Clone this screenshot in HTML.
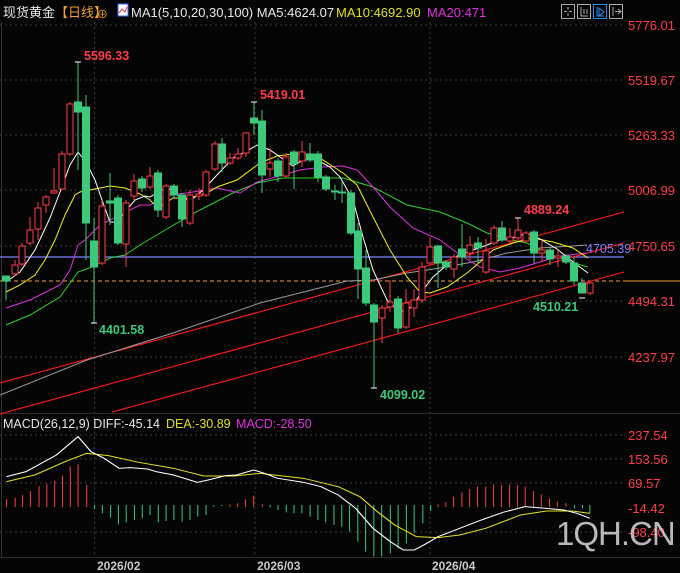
<!DOCTYPE html>
<html><head><meta charset="utf-8"><style>
html,body{margin:0;padding:0;background:#050505;}
body{width:680px;height:573px;overflow:hidden;position:relative;font-family:"Liberation Sans","Noto Sans CJK SC",sans-serif;}
svg{position:absolute;left:0;top:0;}
text{font-family:"Liberation Sans","Noto Sans CJK SC",sans-serif;}
</style></head><body>
<svg width="680" height="573" viewBox="0 0 680 573" xmlns="http://www.w3.org/2000/svg">
<rect width="680" height="573" fill="#050505"/>
<line x1="1.5" y1="22" x2="1.5" y2="557" stroke="#333" />
<!-- grid -->
<g stroke="#3a3a3a" stroke-dasharray="2,3" stroke-width="1">
<line x1="0" y1="25" x2="625" y2="25"/><line x1="0" y1="80" x2="625" y2="80"/><line x1="0" y1="135" x2="625" y2="135"/><line x1="0" y1="190" x2="625" y2="190"/><line x1="0" y1="246" x2="625" y2="246"/><line x1="0" y1="301" x2="625" y2="301"/><line x1="0" y1="357" x2="625" y2="357"/>
<line x1="0" y1="435" x2="625" y2="435"/><line x1="0" y1="459" x2="625" y2="459"/><line x1="0" y1="483" x2="625" y2="483"/><line x1="0" y1="532" x2="625" y2="532"/>
<line x1="94.5" y1="22" x2="94.5" y2="557"/><line x1="255" y1="22" x2="255" y2="557"/><line x1="430" y1="22" x2="430" y2="557"/>
</g>
<line x1="0" y1="413.5" x2="680" y2="413.5" stroke="#2a2a2a"/>
<line x1="0" y1="557.5" x2="680" y2="557.5" stroke="#2a2a2a"/>
<!-- horizontal lines -->
<line x1="0" y1="257" x2="624" y2="257" stroke="#7f7fff" stroke-width="1.2"/>
<line x1="0" y1="281" x2="624" y2="281" stroke="#f0a040" stroke-dasharray="4,3"/>
<line x1="624" y1="281" x2="680" y2="281" stroke="#f0a040"/>
<!-- trend lines -->
<g stroke="#ff1a1a" stroke-width="1.1">
<line x1="0" y1="383" x2="624" y2="212"/>
<line x1="0" y1="414" x2="624" y2="243"/>
<line x1="112" y1="412" x2="624" y2="272"/>
</g>
<!-- MA lines -->
<g fill="none" stroke-width="1">
<polyline stroke="#9a9a9a" points="0,395 87,360 173,333 260,303 347,281 373,280 407,273 440,268 473,262 507,253 540,248 573,246 587,245"/>
<polyline stroke="#30d030" points="6,325 30,315 60,297 78,272 92,267 110,258 125,255 140,245 150,239 177,223 200,210 233,193 257,183 283,178 317,178 343,178 373,187 407,205 440,212 467,223 487,233 507,239 527,243 547,253 573,263 588,267"/>
<polyline stroke="#e030e0" points="6,308 30,300 60,285 70,270 78,245 85,240 100,225 120,215 140,205 150,205 167,195 187,193 217,188 240,193 257,182 283,175 300,170 323,167 343,166 357,170 373,187 390,207 413,228 440,240 460,255 480,267 500,272 520,268 540,262 560,256 587,253"/>
<polyline stroke="#f0f020" points="6,292 20,285 35,275 45,260 55,240 65,215 75,195 80,192 90,190 100,188 110,186 125,188 140,194 150,200 158,208 173,198 190,198 207,193 217,187 237,180 260,163 277,156 293,154 310,154 323,160 343,173 357,185 373,217 390,250 407,277 420,292 430,293 447,287 467,273 480,262 493,250 513,243 533,238 553,242 573,248 588,258"/>
<polyline stroke="#ffffff" points="6,282 20,272 35,250 50,218 60,192 70,165 78,152 86,162 95,180 102,200 110,222 117,222 125,212 135,200 145,196 150,197 167,187 177,195 190,201 203,190 217,175 233,158 247,151 257,145 270,150 280,157 293,166 303,160 317,160 330,167 340,177 353,200 363,237 373,270 387,300 400,312 412,307 423,290 433,277 447,265 457,256 473,250 487,245 500,240 513,238 527,233 540,239 557,249 573,262 588,273"/>
</g>
<!-- candles -->
<g id="c" stroke-width="1">
<g stroke="#3cc97c" fill="#3cc97c">
<line x1="6" y1="276" x2="6" y2="300"/><rect x="2.5" y="276" width="7" height="5"/>
<line x1="78" y1="62" x2="78" y2="170"/><rect x="74.5" y="102" width="7" height="10"/>
<line x1="86" y1="95" x2="86" y2="260"/><rect x="82.5" y="107" width="7" height="116"/>
<line x1="94" y1="218" x2="94" y2="323"/><rect x="90.5" y="241" width="7" height="26"/>
<line x1="110" y1="173" x2="110" y2="225"/><rect x="106.5" y="201" width="7" height="2"/>
<line x1="118" y1="195" x2="118" y2="245"/><rect x="114.5" y="198" width="7" height="45"/>
<line x1="142" y1="176" x2="142" y2="192"/><rect x="138.5" y="179" width="7" height="9"/>
<line x1="158" y1="170" x2="158" y2="217"/><rect x="154.5" y="173" width="7" height="37"/>
<line x1="174" y1="184" x2="174" y2="198"/><rect x="170.5" y="186" width="7" height="9"/>
<line x1="182" y1="193" x2="182" y2="227"/><rect x="178.5" y="195" width="7" height="24"/>
<line x1="222" y1="138" x2="222" y2="172"/><rect x="218.5" y="144" width="7" height="19"/>
<line x1="254" y1="102" x2="254" y2="135"/><rect x="250.5" y="118" width="7" height="5"/>
<line x1="262" y1="110" x2="262" y2="193"/><rect x="258.5" y="121" width="7" height="54"/>
<line x1="278" y1="158" x2="278" y2="182"/><rect x="274.5" y="161" width="7" height="15"/>
<line x1="294" y1="150" x2="294" y2="189"/><rect x="290.5" y="152" width="7" height="12"/>
<line x1="310" y1="143" x2="310" y2="162"/><rect x="306.5" y="154" width="7" height="6"/>
<line x1="318" y1="151" x2="318" y2="182"/><rect x="314.5" y="154" width="7" height="23"/>
<line x1="326" y1="175" x2="326" y2="191"/><rect x="322.5" y="177" width="7" height="12"/>
<line x1="335" y1="185" x2="335" y2="200"/><rect x="331.5" y="191" width="7" height="1"/>
<line x1="342" y1="182" x2="342" y2="203"/><rect x="338.5" y="192" width="7" height="1"/>
<line x1="351" y1="190" x2="351" y2="235"/><rect x="347.5" y="193" width="7" height="40"/>
<line x1="358" y1="223" x2="358" y2="299"/><rect x="354.5" y="231" width="7" height="38"/>
<line x1="366" y1="250" x2="366" y2="306"/><rect x="362.5" y="268" width="7" height="35"/>
<line x1="374" y1="303" x2="374" y2="388"/><rect x="370.5" y="305" width="7" height="17"/>
<line x1="398" y1="296" x2="398" y2="333"/><rect x="394.5" y="299" width="7" height="29"/>
<line x1="438" y1="245" x2="438" y2="288"/><rect x="434.5" y="246" width="7" height="17"/>
<line x1="446" y1="260" x2="446" y2="270"/><rect x="442.5" y="262" width="7" height="5"/>
<line x1="462" y1="224" x2="462" y2="267"/><rect x="458.5" y="249" width="7" height="8"/>
<line x1="478" y1="237" x2="478" y2="263"/><rect x="474.5" y="243" width="7" height="5"/>
<line x1="502" y1="221" x2="502" y2="242"/><rect x="498.5" y="228" width="7" height="12"/>
<line x1="534" y1="230" x2="534" y2="263"/><rect x="530.5" y="232" width="7" height="21"/>
<line x1="550" y1="248" x2="550" y2="265"/><rect x="546.5" y="250" width="7" height="9"/>
<line x1="566" y1="254" x2="566" y2="264"/><rect x="562.5" y="256" width="7" height="6"/>
<line x1="574" y1="257" x2="574" y2="285"/><rect x="570.5" y="263" width="7" height="18"/>
<line x1="582" y1="278" x2="582" y2="293"/><rect x="578.5" y="283" width="7" height="10"/>
</g>
<g stroke="#ff3c4c" fill="#050505">
<line x1="15" y1="260" x2="15" y2="276"/><rect x="12" y="265" width="6" height="9"/>
<line x1="22" y1="243" x2="22" y2="266"/><rect x="19" y="246" width="6" height="18"/>
<line x1="30" y1="217" x2="30" y2="245"/><rect x="27" y="230" width="6" height="13"/>
<line x1="38" y1="202" x2="38" y2="240"/><rect x="35" y="208" width="6" height="21"/>
<line x1="46" y1="195" x2="46" y2="213"/><rect x="43" y="197" width="6" height="8"/>
<line x1="54" y1="168" x2="54" y2="194"/><rect x="51" y="191" width="6" height="2"/>
<line x1="62" y1="151" x2="62" y2="190"/><rect x="59" y="154" width="6" height="35"/>
<line x1="70" y1="102" x2="70" y2="156"/><rect x="67" y="104" width="6" height="50"/>
<line x1="102" y1="200" x2="102" y2="265"/><rect x="99" y="206" width="6" height="57"/>
<line x1="126" y1="200" x2="126" y2="267"/><rect x="123" y="203" width="6" height="41"/>
<line x1="134" y1="174" x2="134" y2="200"/><rect x="131" y="181" width="6" height="15"/>
<line x1="150" y1="167" x2="150" y2="189"/><rect x="147" y="176" width="6" height="11"/>
<line x1="166" y1="184" x2="166" y2="219"/><rect x="163" y="186" width="6" height="31"/>
<line x1="190" y1="190" x2="190" y2="225"/><rect x="187" y="195" width="6" height="28"/>
<line x1="199" y1="188" x2="199" y2="200"/><rect x="196" y="194" width="6" height="2"/>
<line x1="206" y1="170" x2="206" y2="197"/><rect x="203" y="172" width="6" height="23"/>
<line x1="215" y1="141" x2="215" y2="171"/><rect x="212" y="144" width="6" height="25"/>
<line x1="230" y1="153" x2="230" y2="165"/><rect x="227" y="158" width="6" height="5"/>
<line x1="238" y1="148" x2="238" y2="160"/><rect x="235" y="154" width="6" height="4"/>
<line x1="246" y1="132" x2="246" y2="157"/><rect x="243" y="133" width="6" height="20"/>
<line x1="270" y1="148" x2="270" y2="177"/><rect x="267" y="163" width="6" height="6"/>
<line x1="286" y1="153" x2="286" y2="178"/><rect x="283" y="157" width="6" height="19"/>
<line x1="302" y1="141" x2="302" y2="167"/><rect x="299" y="152" width="6" height="9"/>
<line x1="382" y1="305" x2="382" y2="343"/><rect x="379" y="308" width="6" height="10"/>
<line x1="390" y1="280" x2="390" y2="312"/><rect x="387" y="302" width="6" height="5"/>
<line x1="406" y1="289" x2="406" y2="329"/><rect x="403" y="303" width="6" height="24"/>
<line x1="414" y1="289" x2="414" y2="317"/><rect x="411" y="300" width="6" height="8"/>
<line x1="422" y1="262" x2="422" y2="303"/><rect x="419" y="267" width="6" height="33"/>
<line x1="430" y1="238" x2="430" y2="265"/><rect x="427" y="247" width="6" height="16"/>
<line x1="454" y1="254" x2="454" y2="278"/><rect x="451" y="257" width="6" height="12"/>
<line x1="470" y1="236" x2="470" y2="260"/><rect x="467" y="245" width="6" height="8"/>
<line x1="486" y1="239" x2="486" y2="274"/><rect x="483" y="251" width="6" height="21"/>
<line x1="494" y1="225" x2="494" y2="245"/><rect x="491" y="228" width="6" height="15"/>
<line x1="510" y1="228" x2="510" y2="243"/><rect x="507" y="237" width="6" height="4"/>
<line x1="518" y1="218" x2="518" y2="240"/><rect x="515" y="230" width="6" height="8"/>
<line x1="526" y1="231" x2="526" y2="243"/><rect x="523" y="233" width="6" height="8"/>
<line x1="542" y1="240" x2="542" y2="262"/><rect x="539" y="250" width="6" height="3"/>
<line x1="558" y1="250" x2="558" y2="267"/><rect x="555" y="256" width="6" height="2"/>
<line x1="590" y1="281" x2="590" y2="295"/><rect x="587" y="283" width="6" height="10"/>
</g>
</g>
<!-- high/low markers -->
<g stroke="#fff" stroke-width="1">
<line x1="75" y1="62" x2="81" y2="62"/><line x1="251" y1="102" x2="257" y2="102"/><line x1="515" y1="218" x2="521" y2="218"/>
<line x1="91" y1="323" x2="97" y2="323"/><line x1="371" y1="388" x2="377" y2="388"/><line x1="579" y1="298" x2="585" y2="298"/>
</g>
<g font-size="12.5" font-weight="bold">
<text x="84" y="60" fill="#ff3c4c">5596.33</text>
<text x="260" y="99" fill="#ff3c4c">5419.01</text>
<text x="524" y="214" fill="#ff3c4c">4889.24</text>
<text x="99" y="334" fill="#3cc97c">4401.58</text>
<text x="380" y="399" fill="#3cc97c">4099.02</text>
<text x="533" y="311" fill="#3cc97c">4510.21</text>
<text x="586" y="253" fill="#8080ff" font-weight="normal">4705.39</text>
</g>
<!-- right axis -->
<g font-size="13" fill="#ff3c4c">
<text x="628" y="30">5776.01</text><text x="628" y="85">5519.67</text><text x="628" y="140">5263.33</text><text x="628" y="195">5006.99</text><text x="628" y="251">4750.65</text><text x="628" y="306">4494.31</text><text x="628" y="362">4237.97</text>
<text x="628" y="440">237.54</text><text x="628" y="464">153.56</text><text x="628" y="488">69.57</text><text x="628" y="513">-14.42</text><text x="628" y="537">-98.40</text>
</g>
<!-- header -->
<g font-size="13">
<text x="3" y="17" fill="#e8e8e8">现货黄金</text>
<text x="55" y="17" fill="#f0a030">【日线】</text>
<text x="97" y="18" fill="#f0a030" font-size="11">⊕</text>
<rect x="118" y="4" width="10" height="12" fill="#fff" stroke="#36f"/>
<polyline points="119,13 122,9 125,12 127,7" stroke="#e33" fill="none"/>
<text x="131" y="17" fill="#e8e8e8">MA1(5,10,20,30,100) MA5:4624.07</text>
<text x="336" y="17" fill="#e0e020">MA10:4692.90</text>
<text x="427" y="17" fill="#e030e0">MA20:471</text>
</g>
<g fill="none" stroke="#aaa">
<rect x="561.5" y="4.5" width="13" height="14"/><rect x="577.5" y="4.5" width="13" height="14"/><rect x="593.5" y="4.5" width="13" height="14" stroke="#2a8ff0"/><rect x="609.5" y="4.5" width="13" height="14"/>
<path d="M568 7v3M568 13v3M564 11.5h3M569 11.5h3"/>
<path d="M581 7v9h7M584 9v5M587 9v5"/>
<path d="M597 7v9h7M599 8l5 4-5 4z" stroke="#2a8ff0"/>
<path d="M613 7v9M615 11.5h6M618 9l3 2.5-3 2.5"/>
</g>
<!-- MACD -->
<g font-size="12.5">
<text x="3" y="428" fill="#e8e8e8">MACD(26,12,9) DIFF:-45.14</text>
<text x="166" y="428" fill="#e0e020">DEA:-30.89</text>
<text x="236" y="428" fill="#e030e0">MACD:-28.50</text>
</g>
<g transform="translate(0,405) scale(0.4337,0.3333)" stroke-width="2.3">
<g stroke="#ff3c4c">
<path d="M15 306V282M35 306V278M52 306V270M70 306V258M90 306V244M108 306V236M126 306V228M144 306V212M162 306V184M180 306V178M200 306V240M530 306V298M548 306V295M566 306V283M585 306V272M605 306V298M1010 306V298M1028 306V292M1046 306V275M1065 306V262M1083 306V252M1101 306V245M1120 306V245M1138 306V238M1156 306V240M1175 306V238M1193 306V240M1211 306V245M1230 306V258M1248 306V268M1267 306V280M1285 306V290M1305 306V294"/>
</g>
<g stroke="#3cc97c">
<path d="M218 300V312M236 300V325M255 300V338M273 300V358M291 300V352M310 300V345M328 300V340M346 300V330M365 300V352M383 300V348M401 300V345M420 300V350M438 300V345M456 300V335M475 300V330M493 300V305M511 300V303M623 300V307M641 300V315M660 300V322M678 300V325M696 300V325M715 300V335M733 300V345M751 300V352M770 300V360M788 300V365M806 300V380M825 300V410M843 300V440M862 300V455M880 300V455M900 300V445M918 300V430M937 300V415M955 300V385M975 300V355M993 300V318M1325 300V310M1343 300V310M1360 300V325"/>
</g>
<polyline fill="none" stroke="#e0e020" stroke-width="3" points="15,230 80,210 150,170 200,145 250,152 320,172 400,190 470,213 540,213 600,205 700,220 780,245 830,275 870,320 910,360 960,395 1010,398 1060,390 1120,370 1200,330 1260,318 1320,318 1360,325"/>
<polyline fill="none" stroke="#ffffff" stroke-width="3" points="15,215 60,200 130,150 180,95 210,140 240,160 275,190 300,188 340,192 360,200 400,210 455,232 480,225 520,212 545,210 585,195 610,205 640,220 700,232 740,245 780,270 820,310 860,370 900,410 930,435 955,435 980,418 1010,395 1060,370 1110,345 1160,322 1210,305 1260,310 1300,315 1330,325 1360,340"/>
</g>
<!-- dates -->
<g font-size="12" font-weight="bold" fill="#c8c8c8">
<text x="97" y="570">2026/02</text><text x="257" y="570">2026/03</text><text x="432" y="570">2026/04</text>
</g>
<text x="556" y="545" font-size="33" fill="#d8d8d8" fill-opacity="0.85" letter-spacing="-1">1QH.CN</text>
</svg>
</body></html>
